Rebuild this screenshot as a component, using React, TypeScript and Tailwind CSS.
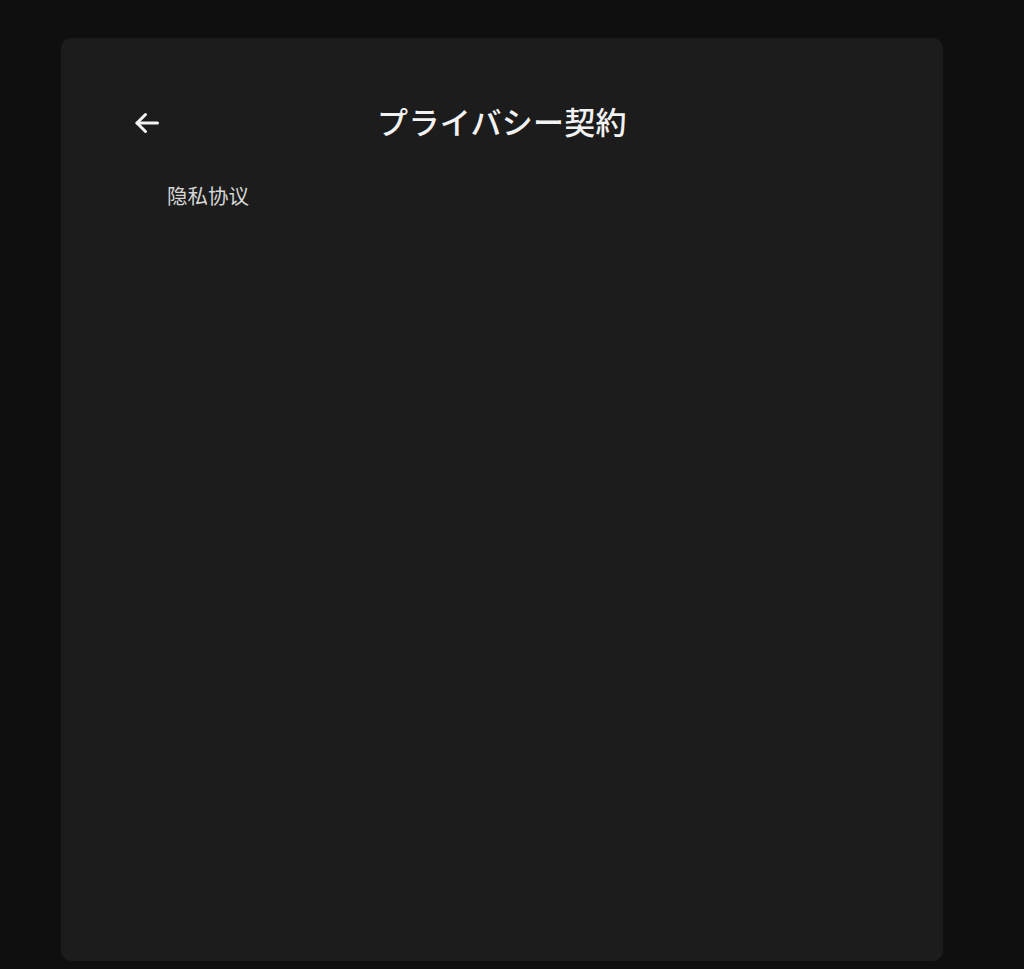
import React from "react";

export default function App() {
  return (
    <div className="min-h-[969px] w-full bg-[#0f0f0f] pt-[38px] font-['Noto_Sans_CJK_JP','Noto_Sans',sans-serif]">
      <div className="ml-[61px] flex h-[923px] w-[882px] flex-col rounded-[10px] bg-[#1c1c1c]">
        <div className="relative mt-[57px] flex h-[50px] items-center justify-center">
          <button className="absolute left-[74px] top-[calc(50%+3px)] -translate-y-1/2 text-[#f2f2f2]">
            <svg width="24" height="21" viewBox="0 0 24 21" fill="none" stroke="currentColor" strokeWidth="3" strokeLinecap="round" strokeLinejoin="round">
              <path d="M22.5 10.5H2" />
              <path d="M10.5 2L2 10.5L10.5 19" />
            </svg>
          </button>
          <h1 className="text-[31px] font-medium leading-none tracking-[0.3px] text-[#f2f2f2] font-['Noto_Sans_CJK_JP',sans-serif]">
            プライバシー契約
          </h1>
        </div>
        <div className="mt-[40px] pl-[106px]">
          <p className="text-[20.5px] leading-none text-[#d6d6d6] font-['Noto_Sans_CJK_SC',sans-serif]">
            隐私协议
          </p>
        </div>
      </div>
    </div>
  );
}
